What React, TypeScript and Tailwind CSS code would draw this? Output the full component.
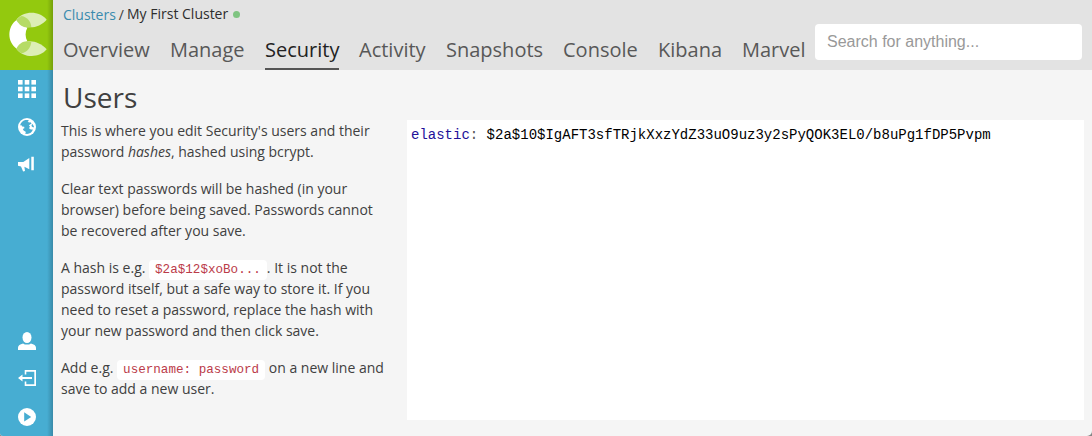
import React from 'react';

const tabs: { label: string; width: string }[] = [
  { label: 'Overview', width: 'w-[87px]' },
  { label: 'Manage', width: 'w-[75px]' },
  { label: 'Security', width: 'w-[74px]' },
  { label: 'Activity', width: 'w-[67px]' },
  { label: 'Snapshots', width: 'w-[97px]' },
  { label: 'Console', width: 'w-[75px]' },
  { label: 'Kibana', width: 'w-[64px]' },
  { label: 'Marvel', width: 'w-[63px]' },
];

function Logo() {
  return (
    <svg width="53" height="70" viewBox="0 0 159 210" className="block">
      <path d="M50 60C21 80 21 126 50 146C60 146 70 134 82 124C75 110 75 96 82 83C70 76 60 62 50 60Z" fill="#fff" />
      <path d="M49 60C69 31 119 31 140 59C116 87 70 92 49 60Z" fill="#dceeb5" />
      <path d="M49 146C69 175 119 175 140 148C116 120 70 112 49 146Z" fill="#dceeb5" />
      <path d="M49 60C56 53 60 50 65 48C82 52 92 63 94 80C75 87 59 78 49 60Z" fill="#b6db66" />
      <path d="M49 146C56 154 60 157 65 160C82 156 92 143 94 126C75 119 59 127 49 146Z" fill="#b6db66" />
    </svg>
  );
}

function GridIcon() {
  return (
    <svg width="18" height="18" viewBox="0 0 18 18" fill="#fff">
      {[0, 6.7, 13.4].map((y) =>
        [0, 6.7, 13.4].map((x) => <rect key={`${x}-${y}`} x={x} y={y} width="4.6" height="4.6" />),
      )}
    </svg>
  );
}

function GlobeIcon() {
  return (
    <svg width="18" height="18" viewBox="0 0 18 18">
      <circle cx="9" cy="9" r="9" fill="#fff" />
      <path
        fill="#47add2"
        d="M2 7.6C2.8 4.6 4.6 2.6 7.2 2L9.8 2L11 2.8L9.6 3.8L11.2 4.6L12.4 4.2L13.6 5.4L12 6.6L10.9 7.6L12 8.6L11 10.2L12.8 11.6L14.9 11.4C14 14 12 15.6 9 16L7 15.6L8 14L5.6 12.4L4.8 11L6.4 10.2L6.2 8.8L4.2 8.6L3.2 7ZM14.6 6L16 8.8L15.4 9.6L13.8 8.5L13.5 7Z"
      />
    </svg>
  );
}

function MegaphoneIcon() {
  return (
    <svg width="18" height="18" viewBox="0 0 18 18" fill="#fff">
      <path d="M0 6H5.3L11.3 2V13.2L6.4 10.8L7 15L5.1 15.5L3 10.4L0 9.7ZM13.3 0.8H15.8V14.3H13.3Z" />
    </svg>
  );
}

function UserIcon() {
  return (
    <svg width="18" height="18" viewBox="0 0 18 18" fill="#fff">
      <ellipse cx="9" cy="5.5" rx="4.5" ry="5.5" />
      <path d="M0 18V15.7C0 13.3 2 12.2 5.1 11.4C7 13 11 13 12.9 11.4C16 12.2 18 13.3 18 15.7V18Z" />
    </svg>
  );
}

function ExitIcon() {
  return (
    <svg width="18" height="18" viewBox="0 0 18 18" fill="#fff">
      <path d="M6.7 0H18V16H6.7V11.6H8.3V14.3H16.3V1.7H8.3V4.4H6.7ZM0 8L4.5 4.4V7H14V9H4.5V11.6Z" />
    </svg>
  );
}

function PlayIcon() {
  return (
    <svg width="18" height="18" viewBox="0 0 18 18">
      <circle cx="9" cy="9" r="9" fill="#fff" />
      <path d="M6.2 4.2L13.2 9L6.2 13.6Z" fill="#47add2" />
    </svg>
  );
}

function Code({ children }: { children: React.ReactNode }) {
  return (
    <code className="rounded bg-white px-[6px] py-[3px] font-['Liberation_Mono','Courier_New',monospace] text-[12.6px] leading-none text-[#bb3b49]">
      {children}
    </code>
  );
}

export default function App() {
  return (
    <div className="h-[436px] w-full overflow-hidden bg-[#858585]">
      <div className="flex h-full w-full overflow-hidden rounded-bl-[3px] rounded-br-[5px] bg-[#f5f5f5] font-['Open_Sans',sans-serif] text-[#404040]">
        <aside className="relative flex w-[53px] shrink-0 flex-col bg-[#47add2]">
          <div className="h-[70px] bg-[#93c90e]">
            <Logo />
          </div>
          <nav className="flex flex-1 flex-col items-center justify-between pt-[10px] pb-[10px]">
            <div className="flex flex-col gap-[20px]">
              <GridIcon />
              <GlobeIcon />
              <MegaphoneIcon />
            </div>
            <div className="flex flex-col gap-[20px]">
              <UserIcon />
              <ExitIcon />
              <PlayIcon />
            </div>
          </nav>
          <div className="absolute inset-y-0 right-0 w-[6px] bg-linear-to-r from-transparent to-black/20" />
        </aside>
        <main className="flex min-w-0 flex-1 flex-col">
          <header className="flex h-[70px] shrink-0 bg-[#e3e3e3] pl-[10px]">
            <div className="flex w-[752px] shrink-0 flex-col">
              <div className="flex h-[30px] items-center text-[14px] leading-[30px] whitespace-nowrap">
                <a className="text-[#3a8bae]">Clusters</a>
                <span className="mx-[3px]">/</span>
                <span className="pb-[2px] leading-[28px] text-[#2d2d2d]">My First Cluster</span>
                <span className="mb-[2px] ml-[5px] h-[7px] w-[7px] rounded-full bg-[#7fc481]" />
              </div>
              <div className="flex h-[40px] gap-[20px]">
                {tabs.map((t) => (
                  <a
                    key={t.label}
                    className={`${t.width} shrink-0 text-[20px] leading-[40px] whitespace-nowrap ${
                      t.label === 'Security' ? 'border-b-2 border-[#555] text-[#222]' : 'text-[#585858]'
                    }`}
                  >
                    {t.label}
                  </a>
                ))}
              </div>
            </div>
            <input
              className="mt-[24px] h-[36px] w-[267px] rounded bg-white px-[12px] font-['Liberation_Sans',Arial,sans-serif] text-[16px] outline-none placeholder:text-[#999]"
              placeholder="Search for anything..."
            />
          </header>
          <h1 className="h-[50px] pl-[10px] text-[28px] leading-[54px]">Users</h1>
          <div className="flex pr-[8px] pl-[8px]">
            <section className="flex w-[346px] shrink-0 flex-col gap-[16px] text-[14px] leading-[21px] whitespace-nowrap">
              <p>
                This is where you edit Security's users and their
                <br />
                password <em>hashes</em>, hashed using bcrypt.
              </p>
              <p>
                Clear text passwords will be hashed (in your
                <br />
                browser) before being saved. Passwords cannot
                <br />
                be recovered after you save.
              </p>
              <p>
                A hash is e.g. <Code>$2a$12$xoBo...</Code>. It is not the
                <br />
                password itself, but a safe way to store it. If you
                <br />
                need to reset a password, replace the hash with
                <br />
                your new password and then click save.
              </p>
              <p>
                Add e.g. <Code>username: password</Code> on a new line and
                <br />
                save to add a new user.
              </p>
            </section>
            <pre className="h-[300px] flex-1 bg-white pt-[7px] pl-[4px] font-['Liberation_Mono','Courier_New',monospace] text-[14px] leading-[17px] text-black">
              <span className="text-[#221199]">elastic</span>
              <span className="text-[#555]">:</span>
              {' $2a$10$IgAFT3sfTRjkXxzYdZ33uO9uz3y2sPyQOK3EL0/b8uPg1fDP5Pvpm'}
            </pre>
          </div>
        </main>
      </div>
    </div>
  );
}
